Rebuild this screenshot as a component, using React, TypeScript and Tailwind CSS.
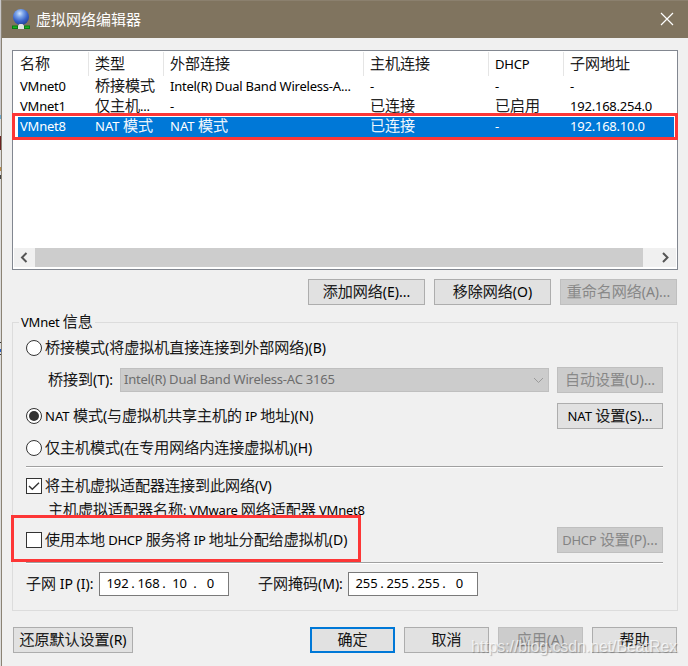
import React from "react";
import clsx from "clsx";

const CJK_RUN = /([\u4e00-\u9fff]+)/;

/** Chinese runs are larger, shortcut runs such as "(R)" sit in between. */
function runClass(run: string) {
  if (CJK_RUN.test(run)) return "text-[15px] font-light [-webkit-text-stroke:0.25px_currentColor]";
  if (/[()]/.test(run) && !/[a-z]/.test(run)) return "text-[14px]";
  if (run.startsWith("NAT")) return "text-[13px]";
  return "text-[13px] tracking-[-0.22px]";
}

function Label({ text }: { text: string }) {
  return (
    <>
      {text
        .split(CJK_RUN)
        .filter(Boolean)
        .map((run, i) => (
          <span key={i} className={runClass(run)}>
            {run}
          </span>
        ))}
    </>
  );
}

interface PushButtonProps {
  text: string;
  className: string;
  disabled?: boolean;
  primary?: boolean;
}

function PushButton({ text, className, disabled, primary }: PushButtonProps) {
  return (
    <button
      type="button"
      disabled={disabled}
      className={clsx(
        "flex h-[26px] flex-none items-center justify-center whitespace-pre pb-[2px]",
        primary ? "border-2 border-[#0078d7] bg-[#e1e1e1]" : "border",
        !primary && !disabled && "border-[#adadad] bg-[#e1e1e1]",
        disabled && "border-[#bfbfbf] bg-[#cccccc] text-[#838383]",
        className
      )}
    >
      <span className="leading-5">
        <Label text={text} />
      </span>
    </button>
  );
}

function Radio({ text, checked = false }: { text: string; checked?: boolean }) {
  return (
    <label className="flex h-5 items-center">
      <span className="mr-[3px] flex size-4 flex-none items-center justify-center rounded-full border border-[#333] bg-white">
        {checked && <span className="size-[10px] rounded-full bg-[#333]" />}
      </span>
      <span className="whitespace-pre pb-[2px] leading-5">
        <Label text={text} />
      </span>
    </label>
  );
}

function Checkbox({ text, checked = false }: { text: string; checked?: boolean }) {
  return (
    <label className="flex h-5 items-center">
      <span className="mr-[3px] flex size-4 flex-none items-center justify-center border border-[#333] bg-white">
        {checked && (
          <svg width="14" height="14" viewBox="0 0 14 14" fill="none" stroke="#333" strokeWidth="1.4">
            <path d="M2 7 5.300 10.300 12 3.800" />
          </svg>
        )}
      </span>
      <span className="whitespace-pre pb-[2px] leading-5">
        <Label text={text} />
      </span>
    </label>
  );
}

function Separator() {
  return <div className="h-[2px] w-[637px] border-b border-t border-b-white border-t-[#a0a0a0]" />;
}

function IpField({ parts }: { parts: string[] }) {
  return (
    <div className="flex h-6 w-[130px] border border-[#7a7a7a] bg-white pl-1 text-[13px] leading-[21px] tracking-[-0.1px]">
      {parts.map((part, i) => (
        <React.Fragment key={i}>
          {i > 0 && <span className="w-[4px] text-center">.</span>}
          <span className="w-[27px] text-center">{part}</span>
        </React.Fragment>
      ))}
    </div>
  );
}

const columns = [
  { title: "名称", width: "w-[75px]" },
  { title: "类型", width: "w-[75px]" },
  { title: "外部连接", width: "w-[200px]" },
  { title: "主机连接", width: "w-[125px]" },
  { title: "DHCP", width: "w-[75px]" },
  { title: "子网地址", width: "w-[108px]" },
];

const rows = [
  ["VMnet0", "桥接模式", "Intel(R) Dual Band Wireless-A...", "-", "-", "-"],
  ["VMnet1", "仅主机...", "-", "已连接", "已启用", "192.168.254.0"],
  ["VMnet8", "NAT 模式", "NAT 模式", "已连接", "-", "192.168.10.0"],
];

function NetworkIcon() {
  return (
    <svg className="mr-[6px] flex-none" width="18" height="21" viewBox="0 0 18 21">
      <defs>
        <radialGradient id="globe" cx="0.42" cy="0.28" r="0.75">
          <stop offset="0" stopColor="#d2e4fc" />
          <stop offset="0.3" stopColor="#7ba4ea" />
          <stop offset="0.65" stopColor="#3a63c8" />
          <stop offset="1" stopColor="#203f96" />
        </radialGradient>
      </defs>
      <circle cx="9" cy="8" r="8" fill="url(#globe)" />
      <path d="M7.500 15h3l1.500 1.500V20H6v-3.500z" fill="#dfe4df" />
      <path d="M0 16.500h6V20H0zM12 16.500h6V20h-6z" fill="#087c12" />
      <path d="M1 17.500h4V19H1zM13 17.500h4V19h-4z" fill="#18b51e" />
    </svg>
  );
}

function NetworkList() {
  return (
    <div className="ml-[9px] flex h-[220px] w-[666px] flex-col border border-[#828790] bg-white px-px pb-[2px]">
      <div className="flex h-[26px] pt-px">
        {columns.map((col, i) => (
          <div
            key={col.title}
            className={clsx(
              "h-6 flex-none whitespace-pre pl-[6px] leading-[22px]",
              col.width,
              i < columns.length - 1 && "border-r border-[#e5e5e5]"
            )}
          >
            <Label text={col.title} />
          </div>
        ))}
      </div>
      {rows.map((row, r) => (
        <div
          key={row[0]}
          className={clsx("flex h-5 flex-none", r === 2 && "ml-1 mr-[2px] bg-[#0078d7] text-white")}
        >
          {row.map((cell, c) => (
            <div
              key={c}
              className={clsx(
                "flex-none whitespace-pre pl-[6px] leading-[17px]",
                columns[c].width,
                r === 2 && c === 0 && "-ml-1"
              )}
            >
              <Label text={cell} />
            </div>
          ))}
        </div>
      ))}
      <div className="mt-auto flex h-[19px] items-center bg-[#f0f0f0]">
        <svg className="w-[21px] flex-none" height="19" viewBox="0 0 21 19" fill="none" stroke="#555" strokeWidth="2">
          <path d="M12.500 5 8 9.500l4.500 4.500" />
        </svg>
        <div className="h-full w-[608px] flex-none bg-[#cdcdcd]" />
        <svg className="ml-auto w-[21px] flex-none" height="19" viewBox="0 0 21 19" fill="none" stroke="#555" strokeWidth="2">
          <path d="M8 5l4.500 4.500L8 14" />
        </svg>
      </div>
    </div>
  );
}

function InfoGroup() {
  return (
    <fieldset className="ml-[9px] mt-[8px] h-[298px] w-[666px] border border-[#dcdcdc] pl-[13px] pt-0">
      <legend className="-ml-[7px] h-[18px] whitespace-pre px-[2px] leading-[17px]">
        <Label text="VMnet 信息" />
      </legend>
      <div className="-mt-[9px] pt-4">
        <Radio text="桥接模式(将虚拟机直接连接到外部网络)(B)" />
        <div className="mt-[9px] flex h-[26px] items-center">
          <span className="ml-[22px] w-[72px] flex-none whitespace-pre pb-[2px] leading-5">
            <Label text="桥接到(T):" />
          </span>
          <div className="flex h-6 w-[429px] flex-none items-center justify-between border border-[#bfbfbf] bg-[#cccccc] pl-[3px] pr-1 text-[13px] tracking-[-0.22px] text-[#6d6d6d]">
            <span>Intel(R) Dual Band Wireless-AC 3165</span>
            <svg width="11" height="7" viewBox="0 0 11 7" fill="none" stroke="#9a9a9a">
              <path d="M1 1l4.500 4.500L10 1" />
            </svg>
          </div>
          <PushButton text="自动设置(U)..." disabled className="ml-2 w-[106px]" />
        </div>
        <div className="mt-[10px] flex h-[26px] w-[637px] items-center justify-between">
          <Radio text="NAT 模式(与虚拟机共享主机的 IP 地址)(N)" checked />
          <PushButton text="NAT 设置(S)..." className="w-[106px]" />
        </div>
        <div className="mb-[8px] mt-[9px]">
          <Radio text="仅主机模式(在专用网络内连接虚拟机)(H)" />
        </div>
        <Separator />
        <div className="mt-[8px]">
          <Checkbox text="将主机虚拟适配器连接到此网络(V)" checked />
        </div>
        <div className="ml-[22px] mt-[3px] h-5 whitespace-pre leading-5">
          <Label text="主机虚拟适配器名称: VMware 网络适配器 VMnet8" />
        </div>
        <div className="relative mt-2 flex h-[26px] w-[637px] items-center justify-between">
          {/* this row's backdrop covers the descenders of the line above */}
          <div className="absolute -left-2 -top-[12px] h-[14px] w-[350px] bg-[#f0f0f0]" />
          <Checkbox text="使用本地 DHCP 服务将 IP 地址分配给虚拟机(D)" />
          <PushButton text="DHCP 设置(P)..." disabled className="w-[106px]" />
        </div>
        <div className="mt-[9px]">
          <Separator />
        </div>
        <div className="mt-[8px] flex h-6 items-center whitespace-pre leading-5">
          <span className="w-[73px] flex-none pb-px">
            <Label text="子网 IP (I):" />
          </span>
          <IpField parts={["192", "168", "10", "0"]} />
          <span className="ml-[29px] w-[90px] flex-none pb-px">
            <Label text="子网掩码(M):" />
          </span>
          <IpField parts={["255", "255", "255", "0"]} />
        </div>
      </div>
    </fieldset>
  );
}

/** Sliver of the window behind the dialog. */
function BackgroundEdge() {
  return (
    <div className="flex w-[2px] flex-none flex-col border-r border-[#8b8374] bg-[#dcdcdc]">
      <div className="h-[115px] bg-[#c9c7c9]" />
      <div className="h-1 bg-[#6ba6c9]" />
      <div className="mt-[17px] h-[14px] bg-[#6b2222]" />
      <div className="mt-[17px] h-1 bg-[#b98c4a]" />
      <div className="mt-1 h-1 bg-[#444]" />
      <div className="mt-[163px] h-px bg-[#333]" />
      <div className="mt-[6px] h-[3px] bg-[#2a5fc0]" />
      <div className="mt-[2px] h-px bg-[#333]" />
    </div>
  );
}

export default function App() {
  return (
    <div className="relative flex h-[666px] w-[688px] overflow-hidden bg-[#f0f0f0] font-['Noto_Sans','Noto_Sans_CJK_SC',sans-serif] text-black">
      <BackgroundEdge />
      <div className="flex w-[686px] flex-none flex-col">
        <header className="flex h-[38px] flex-none items-center border-t border-[#8b806e] bg-[#80745f] pl-[10px] pr-[14px] text-white">
          <NetworkIcon />
          <h1 className="flex-1 pb-[2px] text-[15px] leading-5">虚拟网络编辑器</h1>
          <svg className="mb-px" width="14" height="14" viewBox="0 0 14 14" fill="none" stroke="#fff" strokeWidth="1.2">
            <path d="M1 1l12 12M13 1 1 13" />
          </svg>
        </header>
        <main className="pl-px pt-[12px]">
          <NetworkList />
          <div className="ml-[305px] mt-[9px] flex gap-[9px]">
            <PushButton text="添加网络(E)..." className="w-[117px]" />
            <PushButton text="移除网络(O)" className="w-[117px]" />
            <PushButton text="重命名网络(A)..." disabled className="w-[117px]" />
          </div>
          <InfoGroup />
          <div className="ml-[10px] mt-[16px] flex gap-[9px]">
            <PushButton text="还原默认设置(R)" className="mr-[168px] w-[120px]" />
            <PushButton text="确定" primary className="w-[85px]" />
            <PushButton text="取消" className="w-[85px]" />
            <PushButton text="应用(A)" disabled className="w-[85px]" />
            <PushButton text="帮助" className="w-[85px]" />
          </div>
        </main>
      </div>

      {/* highlight frames drawn over the dialog */}
      <div className="absolute left-3 top-[113px] h-[27px] w-[666px] border-[3px] border-[#fd3636]" />
      <div className="absolute left-[11px] top-[515px] h-[47px] w-[350px] border-[3px] border-[#fd3636]" />
      <div className="absolute left-[471px] top-[637px] whitespace-pre font-['Liberation_Sans',sans-serif] text-[16px] leading-5 tracking-[-0.1px] text-white/70 [text-shadow:1px_1px_1px_rgba(0,0,0,0.25)]">
        https://blog.csdn.net/BeatRex
      </div>
    </div>
  );
}
